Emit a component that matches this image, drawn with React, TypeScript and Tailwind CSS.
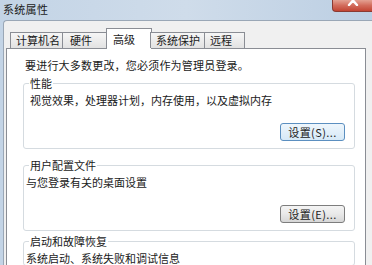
const font = "font-['Noto_Sans_CJK_SC','Noto_Sans',sans-serif]";

const tabs = [
  { name: '计算机名', width: 'w-[53px]', pad: 'pl-[5px]' },
  { name: '硬件', width: 'w-[45px]', pad: 'pl-[7px]' },
  { name: '高级', width: 'w-[46px]', pad: 'pl-[6px]', active: true },
  { name: '系统保护', width: 'w-[55px]', pad: 'pl-[5px]' },
  { name: '远程', width: 'w-[41px]', pad: 'pl-[5px]' },
];

function CloseButton() {
  return (
    <div className="w-[40px] h-[12px] rounded-bl-[4px] border border-t-0 border-r-0 border-[#8b3a32] bg-gradient-to-b from-[#e3a092] via-[#d26b5b] to-[#c24433] flex justify-center overflow-hidden">
      <svg width="12" height="10" viewBox="0 0 12 10" className="-mt-[4px]">
        <path d="M2 0 L10 9 M10 0 L2 9" stroke="#ffffff" strokeWidth="2.4" strokeLinecap="round" />
      </svg>
    </div>
  );
}

function SettingsButton({ label, focused }: { label: string; focused?: boolean }) {
  return (
    <button
      className={`w-[65px] h-[18px] rounded-[3px] border text-[11px] leading-[16px] tracking-[0.4px] text-[#222] ${
        focused
          ? 'border-[#5b8fc0] bg-gradient-to-b from-[#eef6fc] to-[#d6e9f7]'
          : 'border-[#7d7d7d] bg-gradient-to-b from-[#f4f4f4] via-[#e9e9e9] to-[#d6d6d6]'
      }`}
    >
      {label}
    </button>
  );
}

function Group({
  title,
  text,
  textPad,
  button,
  focused,
  className = '',
}: {
  title: string;
  text: string;
  textPad: string;
  button?: string;
  focused?: boolean;
  className?: string;
}) {
  return (
    <fieldset className={`w-[332px] border border-[#d5dbe0] rounded-[3px] ${className}`}>
      <legend className="ml-[5px] px-[1px] leading-[13px]">{title}</legend>
      <p className={`pt-[3px] leading-[14px] ${textPad}`}>{text}</p>
      {button && (
        <div className="flex justify-end pr-[9px] mt-[16px] pb-[7px]">
          <SettingsButton label={button} focused={focused} />
        </div>
      )}
    </fieldset>
  );
}

export default function App() {
  return (
    <div
      className={`w-[372px] h-[265px] overflow-hidden flex flex-col bg-gradient-to-r from-[#c3d4e6] via-[#cfdcea] to-[#bccfe3] text-[11px] text-[#1a1a1a] ${font}`}
    >
      {/* Title bar */}
      <div className="h-[20px] shrink-0 flex items-start justify-between">
        <span className="pl-[3px] pt-[2px] leading-[14px] tracking-[0.3px]">系统属性</span>
        <CloseButton />
      </div>

      {/* Window body */}
      <div className="flex-1 flex pl-[3px]">
        <div className="flex-1 flex flex-col bg-[#f0f0f0] border-t border-l border-[#9aa7b6] rounded-tl-[4px] pt-[7px]">
          {/* Tabs */}
          <div className="h-[20px] flex items-end pl-[6px] relative z-10">
            {tabs.map((tab) =>
              tab.active ? (
                <div
                  key={tab.name}
                  className={`${tab.width} ${tab.pad} h-[21px] -mb-px -mx-px bg-white border border-b-0 border-[#8a8d94] leading-[18px] pt-[1px]`}
                >
                  {tab.name}
                </div>
              ) : (
                <div
                  key={tab.name}
                  className={`${tab.width} ${tab.pad} h-[16px] border border-b-0 border-[#8a8d94] -ml-px first:ml-0 bg-gradient-to-b from-[#f6f6f6] to-[#e2e2e2] leading-[15px]`}
                >
                  {tab.name}
                </div>
              )
            )}
          </div>

          {/* Tab panel */}
          <div className="w-[360px] ml-[2px] flex-1 bg-white border border-[#8a8d94] pl-[16px] pt-[9px]">
            <p className="ml-[2px] leading-[14px] tracking-[0.2px]">要进行大多数更改，您必须作为管理员登录。</p>
            <Group
              className="mt-[5px]"
              title="性能"
              text="视觉效果，处理器计划，内存使用，以及虚拟内存"
              textPad="pl-[6px]"
              button="设置(S)..."
              focused
            />
            <Group
              className="mt-[10px]"
              title="用户配置文件"
              text="与您登录有关的桌面设置"
              textPad="pl-[2px]"
              button="设置(E)..."
            />
            <Group
              className="mt-[4px]"
              title="启动和故障恢复"
              text="系统启动、系统失败和调试信息"
              textPad="pl-[2px]"
            />
          </div>
        </div>
      </div>
    </div>
  );
}
